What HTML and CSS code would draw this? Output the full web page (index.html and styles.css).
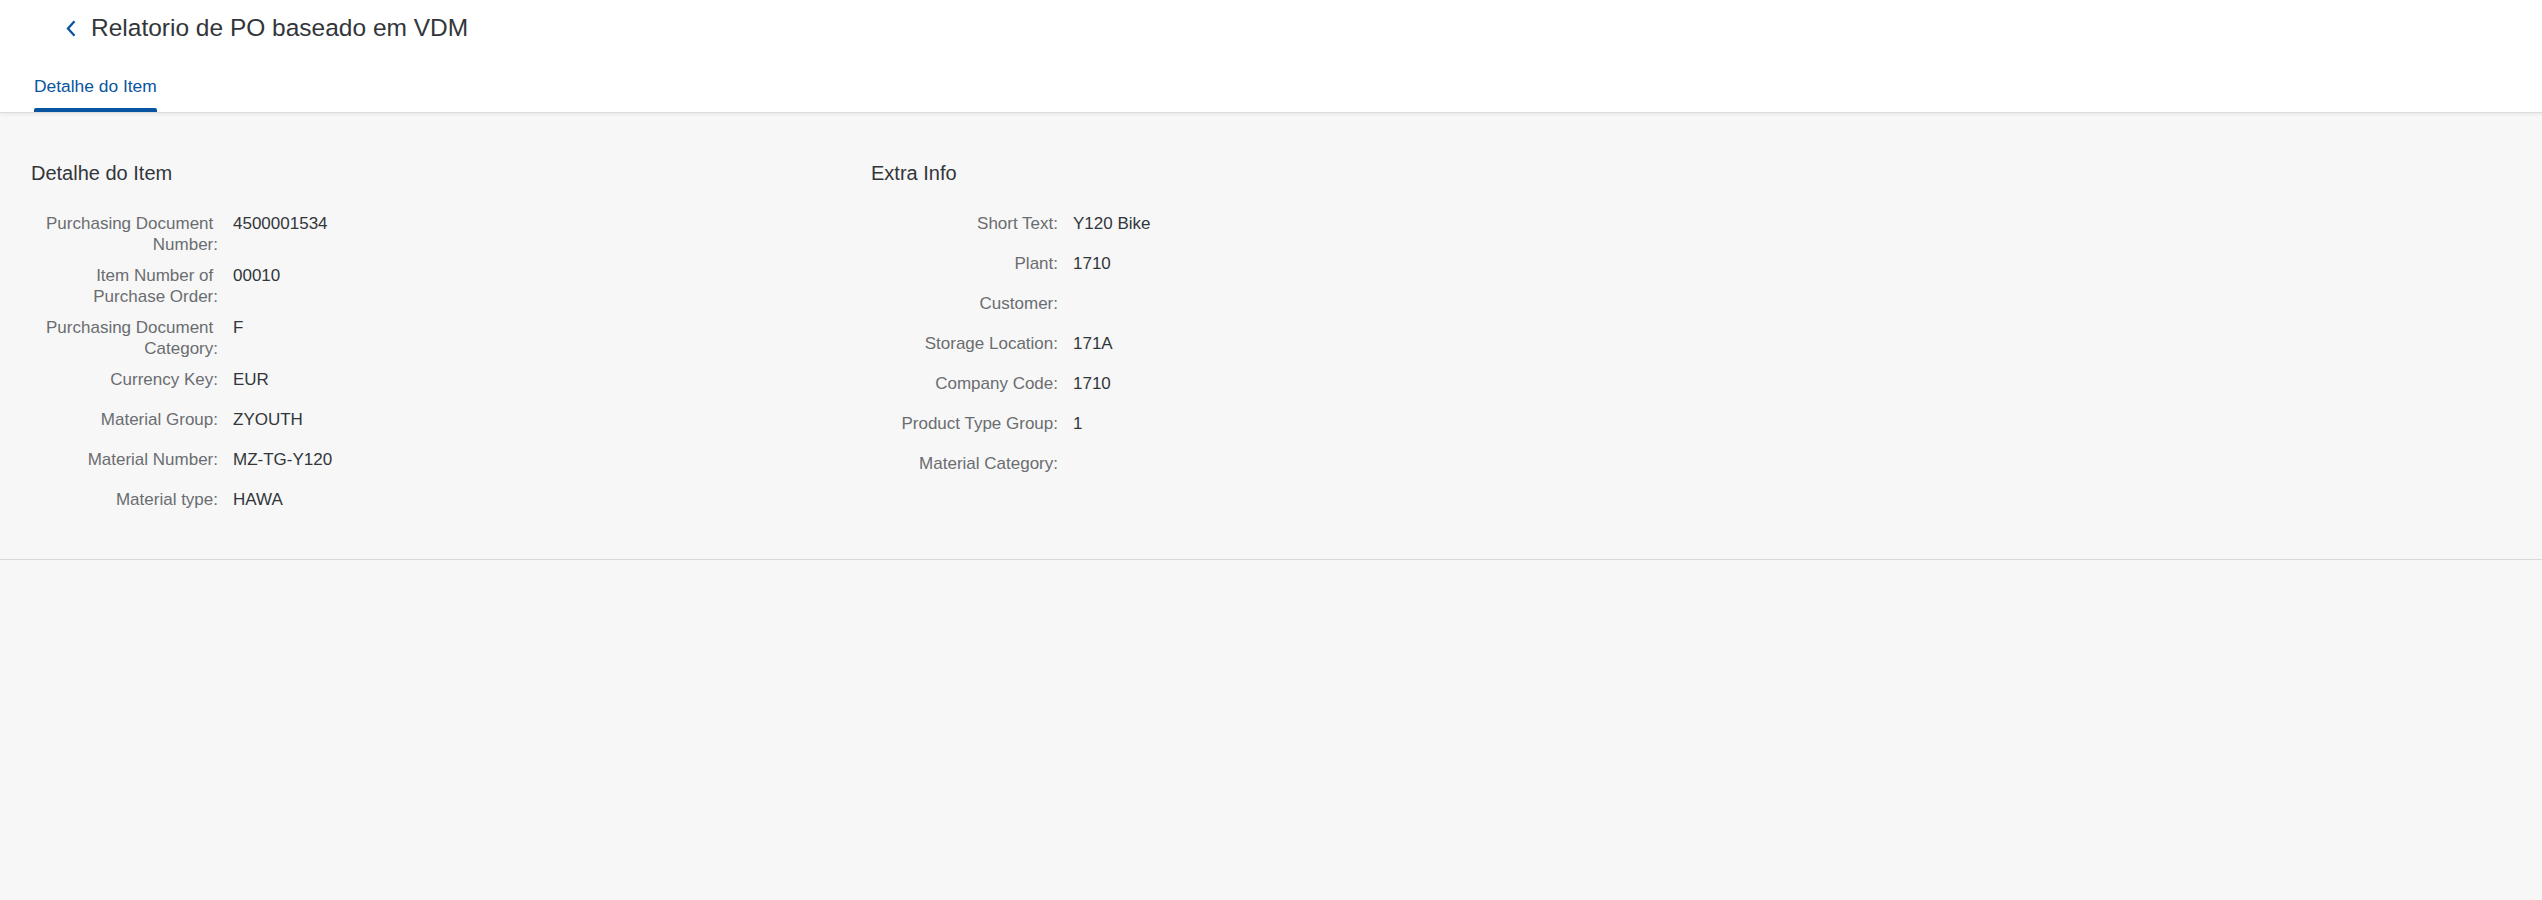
FILE: index.html
```html
<!DOCTYPE html>
<html lang="pt">

<head>
    <meta charset="UTF-8">
    <meta name="viewport" content="width=device-width, initial-scale=1.0">
    <title>Relatorio de PO baseado em VDM</title>
    <link rel="stylesheet" href="styles.css">
</head>

<body>
    <header class="page-header">
        <div class="title-bar">
            <button class="back-btn" aria-label="Voltar">
                <svg width="12" height="17" viewBox="0 0 12 17">
                    <polyline points="9.5,1.2 3,8.5 9.5,15.8" fill="none" stroke="#0854a0" stroke-width="2.3" />
                </svg>
            </button>
            <h1 class="title">Relatorio de PO baseado em VDM</h1>
        </div>
        <nav class="tab-bar">
            <div class="tab active">Detalhe do Item</div>
        </nav>
    </header>

    <section class="section">
        <div class="form-columns">
            <div class="form-group">
                <h2 class="group-title">Detalhe do Item</h2>
                <div class="row">
                    <div class="label">Purchasing Document Number:</div>
                    <div class="value">4500001534</div>
                </div>
                <div class="row">
                    <div class="label">Item Number of Purchase Order:</div>
                    <div class="value">00010</div>
                </div>
                <div class="row">
                    <div class="label">Purchasing Document Category:</div>
                    <div class="value">F</div>
                </div>
                <div class="row">
                    <div class="label">Currency Key:</div>
                    <div class="value">EUR</div>
                </div>
                <div class="row">
                    <div class="label">Material Group:</div>
                    <div class="value">ZYOUTH</div>
                </div>
                <div class="row">
                    <div class="label">Material Number:</div>
                    <div class="value">MZ-TG-Y120</div>
                </div>
                <div class="row">
                    <div class="label">Material type:</div>
                    <div class="value">HAWA</div>
                </div>
            </div>

            <div class="form-group">
                <h2 class="group-title">Extra Info</h2>
                <div class="row">
                    <div class="label">Short Text:</div>
                    <div class="value">Y120 Bike</div>
                </div>
                <div class="row">
                    <div class="label">Plant:</div>
                    <div class="value">1710</div>
                </div>
                <div class="row">
                    <div class="label">Customer:</div>
                    <div class="value"></div>
                </div>
                <div class="row">
                    <div class="label">Storage Location:</div>
                    <div class="value">171A</div>
                </div>
                <div class="row">
                    <div class="label">Company Code:</div>
                    <div class="value">1710</div>
                </div>
                <div class="row">
                    <div class="label">Product Type Group:</div>
                    <div class="value">1</div>
                </div>
                <div class="row">
                    <div class="label">Material Category:</div>
                    <div class="value"></div>
                </div>
            </div>
        </div>
    </section>
</body>

</html>
```

FILE: styles.css
```css
* {
    box-sizing: border-box;
}

body {
    margin: 0;
    min-height: 100vh;
    font-family: 'Liberation Sans', Arial, sans-serif;
    background-color: #f7f7f7;
    color: #32363a;
}

/* header */

.page-header {
    position: relative;
    z-index: 1;
    height: 112px;
    background-color: #fff;
    box-shadow: 0 1px 0 #dcdcdc, 0 2px 4px rgba(0, 0, 0, 0.08);
}

.title-bar {
    display: flex;
    align-items: center;
    height: 56px;
    padding-left: 65px;
}

.back-btn {
    display: flex;
    align-items: center;
    margin: 0 14px 0 0;
    padding: 0;
    border: none;
    background: none;
}

.title {
    margin: 0;
    font-size: 24.5px;
    font-weight: normal;
    line-height: 28px;
    color: #32363a;
}

.tab-bar {
    display: flex;
    height: 56px;
    padding-left: 34px;
}

.tab {
    position: relative;
    padding-top: 20px;
    font-size: 17.4px;
    line-height: 20px;
    color: #0854a0;
}

.tab.active::after {
    content: '';
    position: absolute;
    left: 0;
    right: 0;
    bottom: 0;
    height: 4px;
    border-radius: 2px 2px 0 0;
    background-color: #0854a0;
}

/* form */

.section {
    padding: 49px 0 35px 31px;
    border-bottom: 1px solid #d9d9d9;
}

.form-columns {
    display: flex;
}

.form-group {
    width: 840px;
}

.group-title {
    margin: 0 0 23px;
    font-size: 20px;
    font-weight: normal;
    line-height: 24px;
    color: #32363a;
}

.row {
    display: flex;
    min-height: 40px;
    padding: 5px 0;
    font-size: 17px;
    line-height: 21px;
}

.label {
    width: 187px;
    flex-shrink: 0;
    text-align: right;
    white-space: break-spaces;
    color: #6a6d70;
}

.value {
    margin-left: 15px;
    color: #32363a;
}
```
